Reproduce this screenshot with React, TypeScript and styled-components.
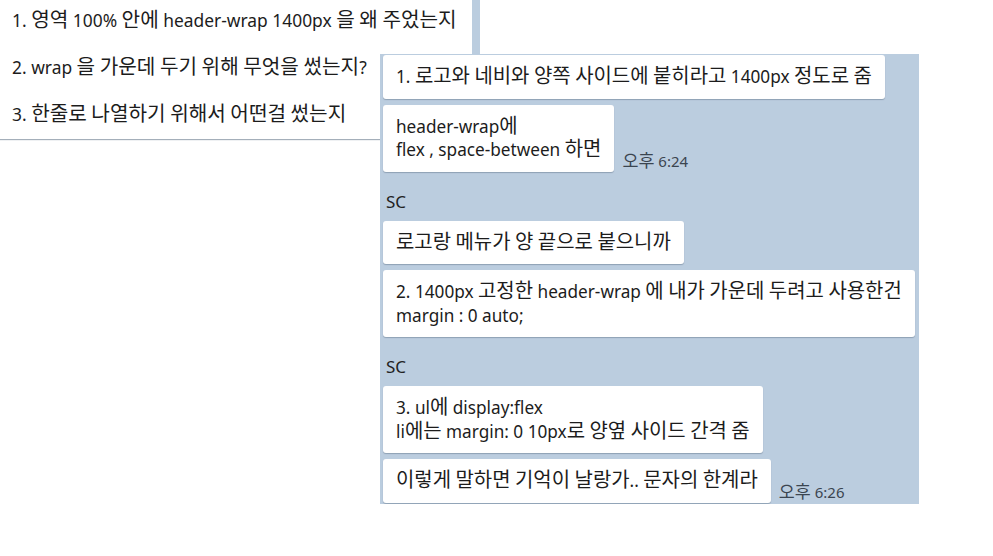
import React from "react";
import styled, { createGlobalStyle } from "styled-components";

const Global = createGlobalStyle`
  html, body { margin: 0; padding: 0; background: #ffffff; }
  body { font-family: "Noto Sans", "Noto Sans CJK KR", sans-serif; color: #1c1c1c; }
`;

const Stage = styled.div`
  display: grid;
  grid-template-columns: 380px 92px 8px 439px;
  grid-template-rows: 54px 85px auto;
  width: 993px;
  height: 556px;
  align-items: start;
`;

const QuestionCard = styled.div`
  grid-column: 1 / 3;
  grid-row: 1 / 3;
  align-self: stretch;
  background: #ffffff;
  box-shadow: 0 1px 1px rgba(90, 110, 130, 0.55);
  display: flex;
  flex-direction: column;
  gap: 24px;
  padding: 9px 0 0 12px;
`;

const QuestionLine = styled.div`
  font-size: 17.4px;
  line-height: 23px;
  white-space: nowrap;
`;

const EdgeStrip = styled.div`
  grid-column: 3;
  grid-row: 1;
  align-self: stretch;
  background: #bbcddf;
`;

const ChatPanel = styled.div`
  grid-column: 2 / 5;
  grid-row: 2 / 4;
  z-index: 1;
  background: #bbcddf;
  height: 449px;
  padding: 1px 0 0 3px;
  display: flex;
  flex-direction: column;
  overflow: hidden;
`;

const Group = styled.div`
  display: flex;
  flex-direction: column;
  gap: 6px;
`;

const Sender = styled.div`
  font-size: 17px;
  line-height: 20px;
  padding: 20px 0 9px 3px;
  color: #222;
`;

const Row = styled.div`
  display: flex;
  align-items: flex-end;
  gap: 8px;
`;

const Bubble = styled.div`
  background: #ffffff;
  border-radius: 3px;
  box-shadow: 0 1px 1px rgba(60, 80, 100, 0.35);
  padding: 10px 13px 10px 13px;
  font-size: 17.2px;
  line-height: 23.5px;
  white-space: nowrap;
`;

const Time = styled.span`
  font-size: 15px;
  line-height: 18px;
  color: #3b4550;
  margin-bottom: 2px;
  white-space: nowrap;
`;

const Hg = styled.span`
  font-family: "Noto Sans CJK KR", sans-serif;
  font-size: 1.16em;
  line-height: 0;
`;

function K({ text }: { text: string }) {
  const parts = text.split(/([\u1100-\u11FF\u3130-\u318F\uAC00-\uD7AF]+)/);
  return (
    <>
      {parts.map((p, i) =>
        i % 2 === 1 ? <Hg key={i}>{p}</Hg> : <React.Fragment key={i}>{p}</React.Fragment>
      )}
    </>
  );
}

type Msg = { lines: string[]; time?: string };

const groups: { sender?: string; msgs: Msg[] }[] = [
  {
    msgs: [
      { lines: ["1. 로고와 네비와 양쪽 사이드에 붙히라고 1400px 정도로 줌"] },
      { lines: ["header-wrap에", "flex , space-between 하면"], time: "오후 6:24" },
    ],
  },
  {
    sender: "SC",
    msgs: [
      { lines: ["로고랑 메뉴가 양 끝으로 붙으니까"] },
      { lines: ["2. 1400px 고정한 header-wrap 에 내가 가운데 두려고 사용한건", "margin : 0 auto;"] },
    ],
  },
  {
    sender: "SC",
    msgs: [
      { lines: ["3. ul에 display:flex", "li에는 margin: 0 10px로 양옆 사이드 간격 줌"] },
      { lines: ["이렇게 말하면 기억이 날랑가.. 문자의 한계라"], time: "오후 6:26" },
    ],
  },
];

const questions = [
  "1. 영역 100% 안에 header-wrap 1400px 을 왜 주었는지",
  "2. wrap 을 가운데 두기 위해 무엇을 썼는지?",
  "3. 한줄로 나열하기 위해서 어떤걸 썼는지",
];

export default function App() {
  return (
    <>
      <Global />
      <Stage>
        <QuestionCard>
          {questions.map((q) => (
            <QuestionLine key={q}>
              <K text={q} />
            </QuestionLine>
          ))}
        </QuestionCard>
        <EdgeStrip />
        <ChatPanel>
          {groups.map((g, gi) => (
            <React.Fragment key={gi}>
              {g.sender && <Sender>{g.sender}</Sender>}
              <Group>
                {g.msgs.map((m, mi) => (
                  <Row key={mi}>
                    <Bubble>
                      {m.lines.map((l, li) => (
                        <div key={li}>
                          <K text={l} />
                        </div>
                      ))}
                    </Bubble>
                    {m.time && (
                      <Time>
                        <K text={m.time} />
                      </Time>
                    )}
                  </Row>
                ))}
              </Group>
            </React.Fragment>
          ))}
        </ChatPanel>
      </Stage>
    </>
  );
}
